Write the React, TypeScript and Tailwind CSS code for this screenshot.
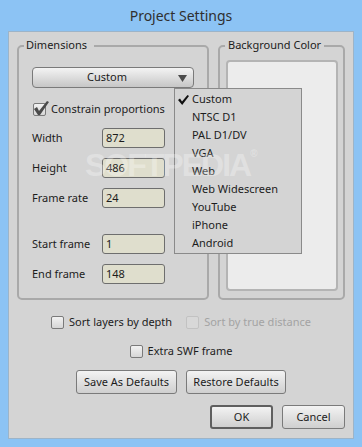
import React from "react";

const menuItems = ["Custom", "NTSC D1", "PAL D1/DV", "VGA", "Web", "Web Widescreen", "YouTube", "iPhone", "Android"];

function CheckBox({ checked, disabled }: { checked?: boolean; disabled?: boolean }) {
  return (
    <span
      className={
        "relative inline-block w-[13px] h-[13px] shrink-0 rounded-[2px] border " +
        (disabled
          ? "border-[#c2c2c2] bg-[#d8d8d8]"
          : "border-[#7a7a7a] bg-gradient-to-b from-[#f2f2f2] to-[#d6d6d6]")
      }
    >
      {checked && (
        <svg className="absolute -left-[1px] -top-[4px]" width="17" height="17" viewBox="0 0 17 17">
          <polygon points="1,9 4,7 6,11 14,1 16,2 7,15 5,15" fill="#4a4a4a" />
        </svg>
      )}
    </span>
  );
}

function Field({ label, value }: { label: string; value: string }) {
  return (
    <div className="flex items-center h-[20px]">
      <span className="w-[83px] pl-[13px] whitespace-nowrap">{label}</span>
      <div className="w-[63px] h-[20px] rounded-[3px] border border-[#6e6e6e] bg-[#dfdecd] pl-[3px] leading-[18px]">
        {value}
      </div>
    </div>
  );
}

function Button({ label, w, strong }: { label: string; w: string; strong?: boolean }) {
  return (
    <button
      className={
        w +
        " h-[24px] rounded-[3px] bg-gradient-to-b from-[#f3f3f3] to-[#cfcfcf] text-[11px] text-[#1c1c1c] " +
        (strong ? "border-2 border-[#5f5f5f]" : "border border-[#7a7a7a]")
      }
    >
      {label}
    </button>
  );
}

export default function App() {
  return (
    <div className="relative w-[362px] h-[447px] overflow-hidden bg-[#8cc3f4] font-['Segoe_UI','Noto_Sans',sans-serif] text-[11px] text-[#1c1c1c]">
      <div className="h-[31px] flex items-center justify-center text-[14px] text-[#2f2f2f]">Project Settings</div>

      <div className="mx-[8px] h-[408px] border border-[#9db4c8] bg-[#d4d4d4] px-[8px] pt-[13px]">
        <div className="flex gap-[9px]">
          {/* Dimensions */}
          <div className="relative w-[192px] h-[255px] rounded-[5px] border-2 border-[#a9a9a9]">
            <span className="absolute -top-[10px] left-[5px] bg-[#d4d4d4] pl-[2px] pr-[7px] leading-[16px]">Dimensions</span>
            <div className="mx-[13px] mt-[20px] h-[21px] rounded-[4px] border border-[#7a7a7a] bg-gradient-to-b from-[#f4f4f4] to-[#c6c6c6] relative flex items-center justify-center">
              <span className="-ml-[12px]">Custom</span>
              <svg className="absolute right-[6px] top-[7px]" width="9" height="7" viewBox="0 0 9 7">
                <polygon points="0,0 9,0 4.5,7" fill="#4a4a4a" />
              </svg>
            </div>
            <div className="flex items-center gap-[5px] ml-[14px] mt-[13px] h-[16px]">
              <CheckBox checked />
              <span>Constrain proportions</span>
            </div>
            <div className="mt-[11px] flex flex-col gap-[10px]">
              <Field label="Width" value="872" />
              <Field label="Height" value="486" />
              <Field label="Frame rate" value="24" />
            </div>
            <div className="mt-[26px] flex flex-col gap-[10px]">
              <Field label="Start frame" value="1" />
              <Field label="End frame" value="148" />
            </div>
          </div>

          {/* Background Color */}
          <div className="relative w-[127px] h-[255px] rounded-[5px] border-2 border-[#a9a9a9]">
            <span className="absolute -top-[10px] left-[5px] bg-[#d4d4d4] px-[3px] leading-[16px]">Background Color</span>
            <div className="ml-[6px] mt-[13px] w-[112px] h-[231px] rounded-[4px] border-2 border-[#b4b4b4] bg-[#ececec]" />
          </div>
        </div>

        <div className="mt-[15px] flex items-center justify-center h-[14px]">
          <div className="flex items-center gap-[5px]">
            <CheckBox />
            <span>Sort layers by depth</span>
          </div>
          <div className="flex items-center gap-[5px] ml-[14px] text-[#a3a3a3]">
            <CheckBox disabled />
            <span>Sort by true distance</span>
          </div>
        </div>

        <div className="mt-[15px] flex items-center justify-center h-[14px]">
          <div className="flex items-center gap-[5px]">
            <CheckBox />
            <span>Extra SWF frame</span>
          </div>
        </div>

        <div className="mt-[12px] flex justify-center gap-[9px]">
          <Button label="Save As Defaults" w="w-[101px]" />
          <Button label="Restore Defaults" w="w-[100px]" />
        </div>

        <div className="mt-[11px] flex justify-end gap-[9px]">
          <Button label="OK" w="w-[63px]" strong />
          <Button label="Cancel" w="w-[63px]" />
        </div>
      </div>

      {/* open dropdown menu */}
      <div className="absolute left-[174px] top-[88px] w-[128px] h-[166px] border border-[#8a8a8a] bg-[#d4d4d4] pt-[1px]">
        {menuItems.map((item, i) => (
          <div key={item} className="relative h-[18px] leading-[18px] pl-[17px]">
            {i === 0 && (
              <svg className="absolute left-[3px] top-[5px]" width="11" height="10" viewBox="0 0 11 10">
                <polygon points="0,5 2,3.5 4,6.5 9.5,0 11,1 4.2,10" fill="#111" />
              </svg>
            )}
            {item}
          </div>
        ))}
      </div>

      {/* watermark */}
      <div className="pointer-events-none absolute left-[85px] top-[149px] text-[32px] leading-none font-bold tracking-[-2px] text-white/30 font-['Liberation_Sans',sans-serif]">
        SOFTPEDIA<span className="text-[10px] align-top">®</span>
      </div>
    </div>
  );
}
